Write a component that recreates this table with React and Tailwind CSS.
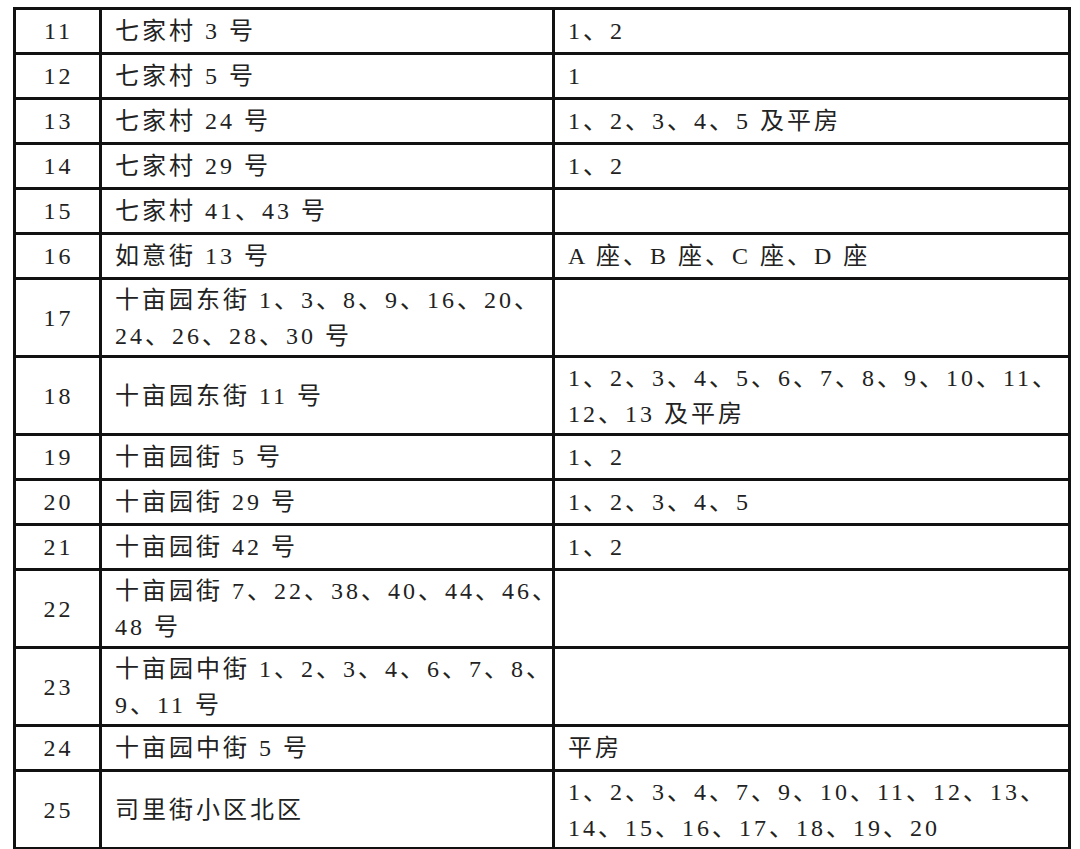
import React from 'react';

// rows of the address table: [no, address lines, buildings lines]
const rows = [
    { no: '11', addr: ['七家村 3 号'], bld: ['1、2'] },
    { no: '12', addr: ['七家村 5 号'], bld: ['1'] },
    { no: '13', addr: ['七家村 24 号'], bld: ['1、2、3、4、5 及平房'] },
    { no: '14', addr: ['七家村 29 号'], bld: ['1、2'] },
    { no: '15', addr: ['七家村 41、43 号'], bld: [] },
    { no: '16', addr: ['如意街 13 号'], bld: ['A 座、B 座、C 座、D 座'] },
    { no: '17', addr: ['十亩园东街 1、3、8、9、16、20、', '24、26、28、30 号'], bld: [] },
    { no: '18', addr: ['十亩园东街 11 号'], bld: ['1、2、3、4、5、6、7、8、9、10、11、', '12、13 及平房'] },
    { no: '19', addr: ['十亩园街 5 号'], bld: ['1、2'] },
    { no: '20', addr: ['十亩园街 29 号'], bld: ['1、2、3、4、5'] },
    { no: '21', addr: ['十亩园街 42 号'], bld: ['1、2'] },
    { no: '22', addr: ['十亩园街 7、22、38、40、44、46、', '48 号'], bld: [] },
    { no: '23', addr: ['十亩园中街 1、2、3、4、6、7、8、', '9、11 号'], bld: [] },
    { no: '24', addr: ['十亩园中街 5 号'], bld: ['平房'] },
    { no: '25', addr: ['司里街小区北区'], bld: ['1、2、3、4、7、9、10、11、12、13、', '14、15、16、17、18、19、20'] },
];

function Lines({ lines }) {
    return lines.map((l, i) => (
        <div key={i} className="whitespace-pre">{l}</div>
    ));
}

export default function App() {
    return (
        <div className="w-[1080px] h-[849px] bg-white overflow-hidden pt-[7px] pl-[13px]">
            <table className="w-[1055px] table-fixed border-collapse border-[3px] border-[#111] font-['Liberation_Serif','Noto_Sans_CJK_SC',serif] text-[24px] leading-[36px] tracking-[3px] text-[#222]">
                <colgroup>
                    <col className="w-[86px]" />
                    <col className="w-[453px]" />
                    <col className="w-[516px]" />
                </colgroup>
                <tbody>
                    {rows.map(r => (
                        <tr key={r.no} className={r.addr.length > 1 || r.bld.length > 1 ? 'h-[78px]' : 'h-[45px]'}>
                            <td className="border-[3px] border-[#111] text-center align-middle p-0 pl-[2px]">{r.no}</td>
                            <td className="border-[3px] border-[#111] align-middle p-0 pl-[13px]">
                                <Lines lines={r.addr} />
                            </td>
                            <td className="border-[3px] border-[#111] align-middle p-0 pl-[13px]">
                                <Lines lines={r.bld} />
                            </td>
                        </tr>
                    ))}
                </tbody>
            </table>
        </div>
    );
}
